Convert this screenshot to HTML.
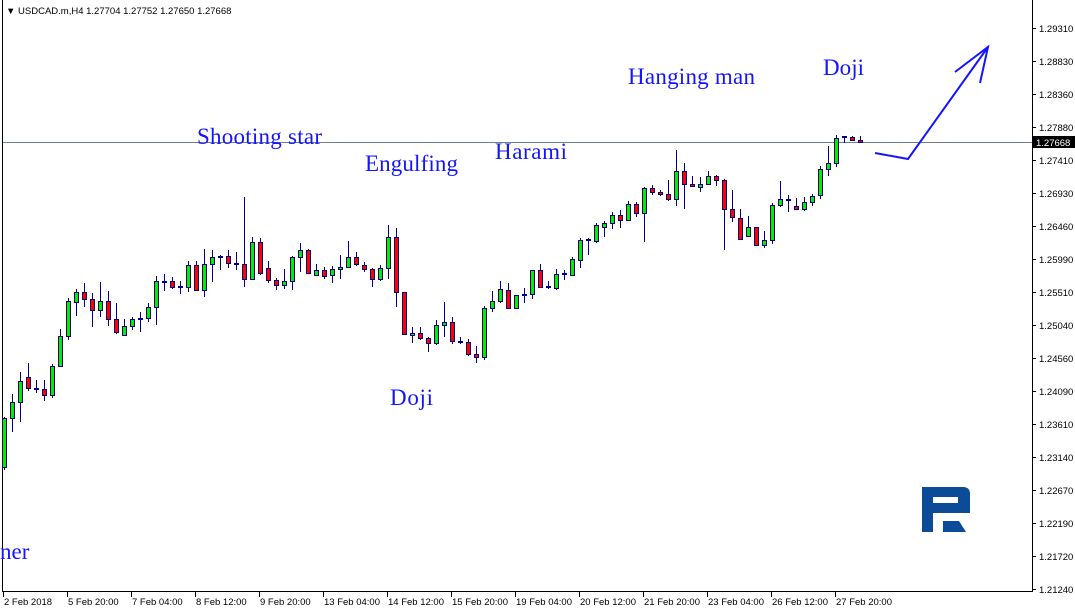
<!DOCTYPE html>
<html><head><meta charset="utf-8"><style>
html,body{margin:0;padding:0;background:#fff;width:1075px;height:613px;overflow:hidden}
svg{display:block}
text{font-family:"Liberation Sans",sans-serif}
.ax{font-size:9.5px;fill:#000}
.lb{font-family:"Liberation Serif",serif;font-size:23px;fill:#1414ff}
</style></head><body>
<svg id="s" width="1075" height="613" viewBox="0 0 1075 613" xmlns="http://www.w3.org/2000/svg">
<rect x="0" y="0" width="1075" height="613" fill="#fff"/>
<line x1="2.5" y1="0" x2="2.5" y2="592" stroke="#000" stroke-width="1"/>
<line x1="2" y1="591.5" x2="1032" y2="591.5" stroke="#000"/>
<line x1="1032.5" y1="0" x2="1032.5" y2="592" stroke="#000"/>
<line x1="3" y1="142.5" x2="1032" y2="142.5" stroke="#708090"/>
<text x="6" y="14" font-size="9.5" fill="#000">▼ USDCAD.m,H4  1.27704 1.27752 1.27650 1.27668</text>
<g id="c"></g>
<g id="ax"></g>
<rect x="1033" y="136" width="42" height="12" fill="#000"/>
<text x="1036" y="146" font-size="9.5" fill="#fff">1.27668</text>
<text class="lb" x="197" y="144" textLength="125">Shooting star</text>
<text class="lb" x="365" y="171" textLength="93">Engulfing</text>
<text class="lb" x="495" y="159" textLength="72">Harami</text>
<text class="lb" x="628" y="84" textLength="127">Hanging man</text>
<text class="lb" x="823" y="75" textLength="41">Doji</text>
<text class="lb" x="390" y="405" textLength="43">Doji</text>
<text class="lb" x="0" y="559">ner</text>
<polyline points="875,153 908,159 988,47" fill="none" stroke="#1414ff" stroke-width="2"/>
<polyline points="955,72 988,47 980,83" fill="none" stroke="#1414ff" stroke-width="2"/>
<g fill="#0b4b97">
<rect x="922" y="487" width="11" height="45"/>
<path d="M922,487 H963 Q970,487 970,494 V513 H933 V503 H958 V497 H922 Z"/>
<path d="M943,521 H959 L966,532 H943 Z"/>
</g>
</svg>
<script>
var d=[
[418,467,417,470,'g'],[402,418,394,432,'g'],[381,402,372,422,'g'],[377,388,363,391,'r'],[389,389,380,393,'d'],[389,395,380,401,'r'],[366,395,364,398,'g'],[336,366,329,367,'g'],[301,336,298,340,'g'],[292,302,289,316,'g'],
[292,299,283,307,'r'],[299,310,293,327,'r'],[301,310,282,317,'g'],[301,319,291,326,'r'],[319,332,303,334,'r'],[326,335,319,335,'g'],[319,326,317,330,'g'],[319,319,312,332,'d'],[307,318,303,322,'g'],[281,307,276,325,'g'],
[282,282,274,291,'d'],[281,287,277,289,'r'],[287,287,281,294,'d'],[265,287,261,292,'g'],[265,290,261,290,'r'],[264,290,249,297,'g'],[257,264,250,282,'g'],[257,257,255,270,'d'],[256,263,250,268,'r'],[264,264,252,270,'d'],
[264,279,197,287,'r'],[242,279,237,279,'g'],[242,273,238,275,'r'],[268,280,261,283,'r'],[280,285,278,290,'r'],[281,285,269,289,'g'],[257,281,256,290,'g'],[250,257,243,272,'g'],[250,273,249,273,'r'],[270,275,264,276,'g'],
[270,276,267,279,'r'],[269,275,266,283,'g'],[267,269,255,279,'g'],[257,267,241,268,'g'],[257,264,252,266,'r'],[265,269,262,272,'r'],[269,279,268,287,'r'],[268,279,265,281,'g'],[237,268,225,279,'g'],[237,292,228,307,'r'],
[292,334,292,334,'r'],[333,335,327,343,'g'],[333,338,327,340,'r'],[338,343,337,352,'r'],[325,343,320,345,'g'],[322,325,302,337,'g'],[322,341,317,344,'r'],[342,342,337,344,'d'],[342,354,339,356,'r'],[354,357,346,363,'r'],
[308,357,306,360,'g'],[301,308,291,312,'g'],[289,301,281,303,'g'],[290,308,283,309,'r'],[295,308,295,309,'g'],[295,295,288,303,'d'],[270,294,270,299,'g'],[270,287,264,288,'r'],[287,287,281,289,'d'],[274,288,269,290,'g'],
[274,274,270,280,'d'],[259,275,257,276,'g'],[240,260,238,268,'g'],[240,240,238,255,'d'],[225,241,223,243,'g'],[223,227,221,237,'g'],[215,223,212,229,'g'],[215,220,210,228,'r'],[204,220,201,221,'g'],[204,213,202,217,'r'],
[188,213,187,242,'g'],[188,192,185,195,'r'],[192,194,190,196,'r'],[194,199,180,201,'r'],[171,199,150,206,'g'],[171,184,163,209,'r'],[184,186,176,187,'r'],[184,187,177,192,'g'],[176,184,171,185,'g'],[176,180,175,186,'r'],
[180,209,179,250,'r'],[209,217,190,222,'r'],[218,239,209,239,'r'],[227,236,216,236,'g'],[227,245,227,246,'r'],[240,245,231,248,'g'],[205,240,203,244,'g'],[199,205,181,207,'g'],[200,200,195,212,'d'],[206,209,198,210,'r'],
[202,209,197,211,'g'],[196,202,194,206,'g'],[169,195,166,199,'g'],[163,169,146,176,'g'],[138,163,135,167,'g'],[137,137,136,143,'d'],[137,140,136,141,'r'],[140,142,136,143,'r']];
var g=document.getElementById('c'),h='';
d.forEach(function(c,i){var x=4+8*i;
h+='<rect x="'+x+'" y="'+c[2]+'" width="1" height="'+(c[3]-c[2])+'" fill="#000080"/>';
if(c[4]=='d'){h+='<rect x="'+(x-2)+'" y="'+(c[0]-1)+'" width="5" height="2" fill="#000080"/>';}
else{var hh=Math.max(c[1]-c[0],2);h+='<rect x="'+(x-2)+'" y="'+c[0]+'" width="5" height="'+(hh+1)+'" fill="#000080"/>';
if(hh>1)h+='<rect x="'+(x-1)+'" y="'+(c[0]+1)+'" width="3" height="'+(hh-1)+'" fill="'+(c[4]=='g'?'#00ee00':'#ff0000')+'"/>';}
});
g.innerHTML=h;
var ax=document.getElementById('ax'),a='';
var pv=['1.29310','1.28830','1.28360','1.27880','1.27410','1.26930','1.26460','1.25990','1.25510','1.25040','1.24560','1.24090','1.23610','1.23140','1.22670','1.22190','1.21720','1.21240'];
pv.forEach(function(p,i){var y=28+i*33.0;a+='<line x1="1032" y1="'+(y+.5)+'" x2="1036" y2="'+(y+.5)+'" stroke="#000"/><text class="ax" x="1039" y="'+(y+4)+'">'+p+'</text>';});
var dt=['2 Feb 2018','5 Feb 20:00','7 Feb 04:00','8 Feb 12:00','9 Feb 20:00','13 Feb 04:00','14 Feb 12:00','15 Feb 20:00','19 Feb 04:00','20 Feb 12:00','21 Feb 20:00','23 Feb 04:00','26 Feb 12:00','27 Feb 20:00'];
dt.forEach(function(t,i){var x=3+64*i;a+='<line x1="'+(x+.5)+'" y1="592" x2="'+(x+.5)+'" y2="597" stroke="#000"/><text class="ax" x="'+(x+1)+'" y="605">'+t+'</text>';});
ax.innerHTML=a;
</script>
</body></html>
